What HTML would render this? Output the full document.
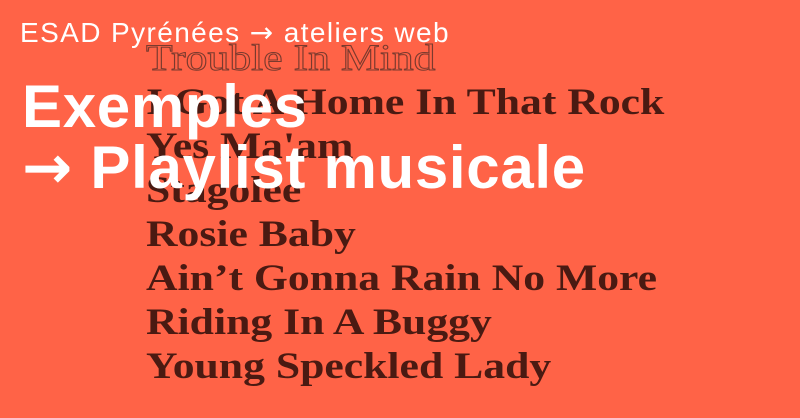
<!DOCTYPE html>
<html><head><meta charset="utf-8"><style>
html,body{margin:0;padding:0}
body{width:800px;height:418px;overflow:hidden;background:#ff6347;position:relative;font-family:"Liberation Sans",sans-serif}
.s{position:absolute;left:146px;font-family:"Liberation Serif",serif;font-weight:bold;font-size:37px;color:#4a1a12;white-space:nowrap;line-height:44px;transform:scaleX(1.18);transform-origin:0 0}
.t{color:transparent;-webkit-text-stroke:1px #7a3a2e;font-weight:normal}
.w{position:absolute;color:#fff;white-space:nowrap}
.a{font-family:"DejaVu Sans",sans-serif}
</style></head><body>
<div class="s t" style="top:37px">Trouble In Mind</div>
<div class="s" style="top:81px">I Got A Home In That Rock</div>
<div class="s" style="top:125px">Yes Ma'am</div>
<div class="s" style="top:169px">Stagolee</div>
<div class="s" style="top:213px">Rosie Baby</div>
<div class="s" style="top:257px">Ain’t Gonna Rain No More</div>
<div class="s" style="top:301px">Riding In A Buggy</div>
<div class="s" style="top:345px">Young Speckled Lady</div>
<div class="w" style="left:20px;top:16px;font-size:28px;letter-spacing:1.4px">ESAD Pyrénées <span class="a">→</span> ateliers web</div>
<div class="w" style="left:22px;top:76px;font-size:60px;font-weight:bold;line-height:61px;letter-spacing:0.7px">Exemples<br><span class="a">→</span> Playlist musicale</div>
</body></html>
